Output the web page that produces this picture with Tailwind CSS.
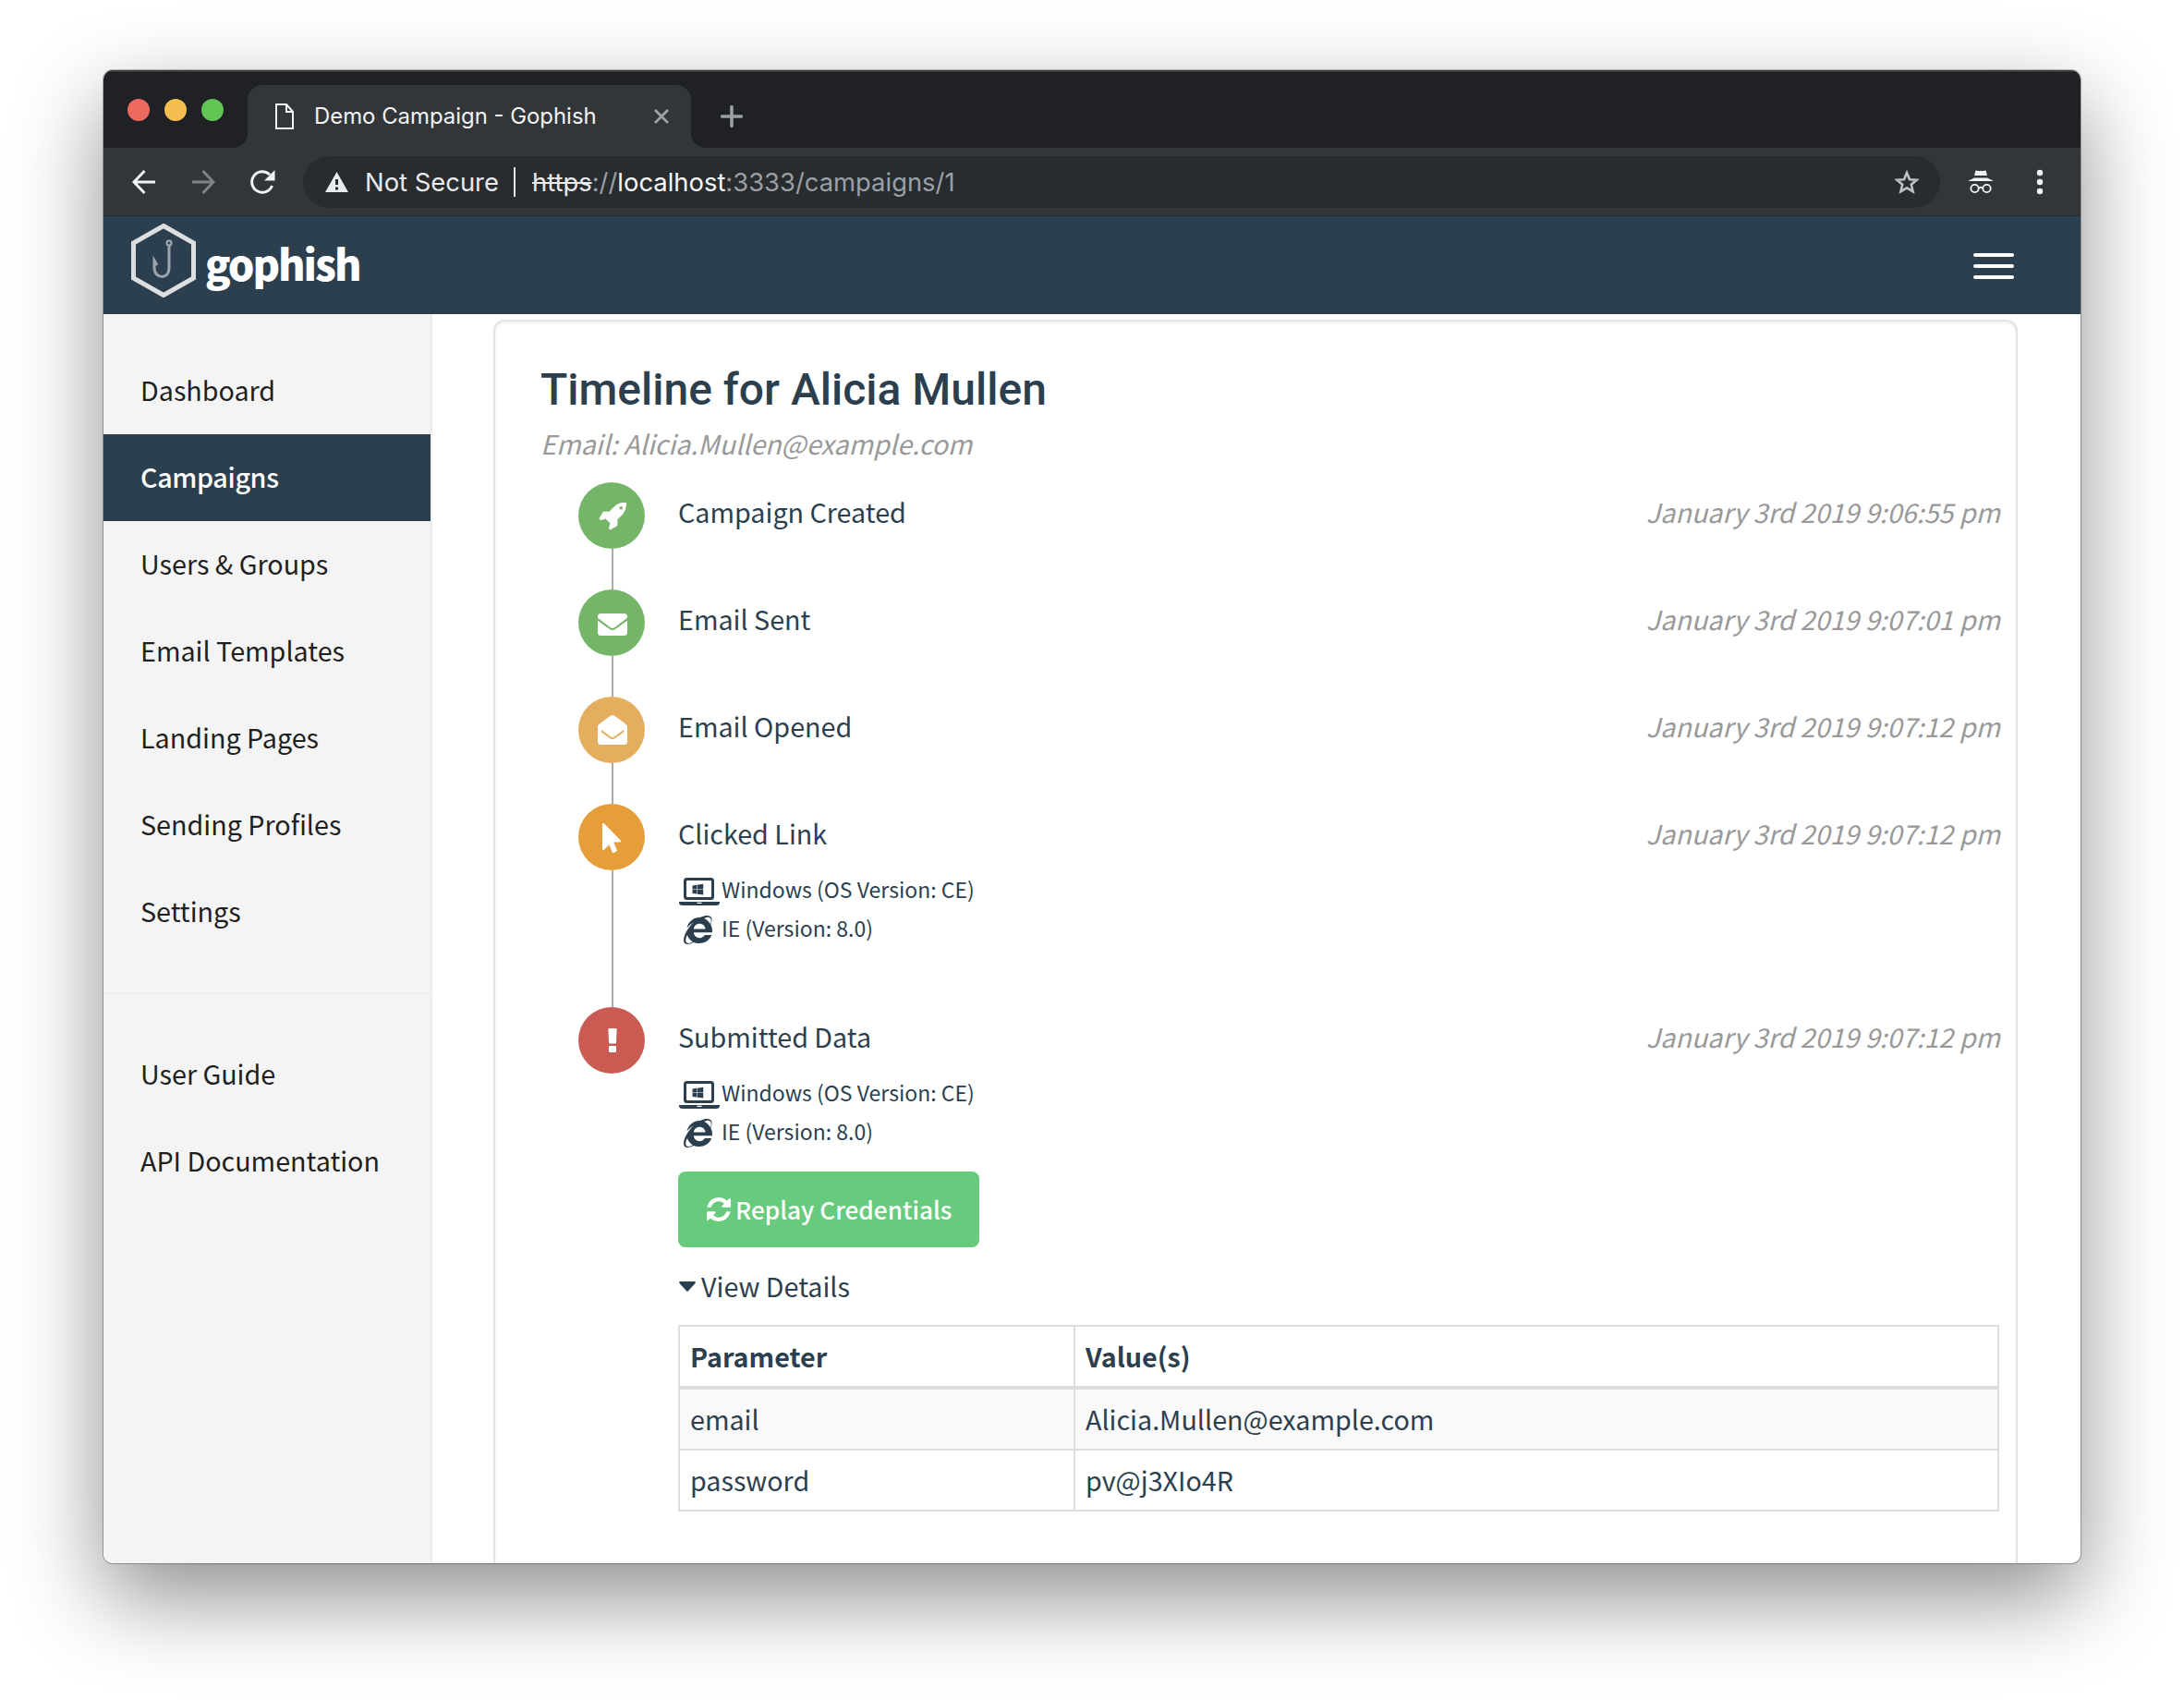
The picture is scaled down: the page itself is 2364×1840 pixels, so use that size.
<!DOCTYPE html>
<html lang="en">
<head>
<meta charset="utf-8">
<title>Demo Campaign - Gophish</title>
<script src="https://cdn.jsdelivr.net/npm/@tailwindcss/browser@4"></script>
</head>
<body class="bg-white">
<svg class="hidden">
  <symbol id="laptop" viewBox="0 0 44 30"><path fill-rule="evenodd" d="M8.500 0h26a3.500 3.500 0 0 1 3.500 3.500v17a3.500 3.500 0 0 1-3.500 3.500h-26a3.500 3.500 0 0 1-3.500-3.500v-17A3.500 3.500 0 0 1 8.500 0zm.5 3a1 1 0 0 0-1 1v16a1 1 0 0 0 1 1h25a1 1 0 0 0 1-1V4a1 1 0 0 0-1-1zM0 26h44v1.500q-.5 2.500-4 2.500H4q-3.500 0-4-2.500zm19.500.8v1.200h5v-1.200z"/><path transform="translate(14.500 6) scale(.0262)" d="M0 93.700l183.600-25.300v177.400H0V93.700zm0 324.600l183.600 25.300V268.400H0v149.900zm203.800 28L448 480V268.400H203.800v177.900zm0-380.600v180.100H448V32L203.800 65.700z"/></symbol>
  <symbol id="ie" viewBox="0 0 512 512"><path d="M483.049 159.706c10.855-24.575 21.424-60.438 21.424-87.871 0-72.722-79.641-98.371-209.673-38.577-107.632-7.181-211.221 73.670-237.098 186.457 30.852-34.862 78.271-82.298 121.977-101.158C125.404 166.850 79.128 228.002 43.992 291.725 23.246 329.651 0 390.940 0 436.747c0 98.575 92.854 86.500 180.251 42.006 31.423 15.430 66.559 15.573 101.695 15.573 97.124 0 184.249-54.294 216.814-146.022H377.927c-52.509 88.593-196.819 52.996-196.819-47.436H509.900c6.407-43.581-1.655-95.715-26.851-141.162zM64.559 346.877c17.711 51.150 53.703 95.871 100.266 123.304-88.741 48.940-173.267 29.096-100.266-123.304zm115.977-108.873c2-55.151 50.276-94.871 103.980-94.871 53.418 0 101.981 39.720 103.981 94.871H180.536zm184.536-187.600c21.425-10.287 48.563-22.003 72.558-22.003 31.422 0 54.274 21.717 54.274 53.722 0 20.003-7.427 49.007-14.569 67.867-26.280-42.292-65.986-81.584-112.263-99.586z"/></symbol>
</svg>

<div class="w-[2364px] h-[1840px] overflow-hidden pt-[76px] pl-[112px]">
<div class="w-[2140px] h-[1616px] rounded-[10px] overflow-hidden bg-white flex flex-col shadow-[0_0_0_1px_rgba(0,0,0,.28),0_36px_96px_rgba(0,0,0,.45)]">

  <!-- Tab strip -->
  <div class="h-[84px] shrink-0 bg-[#202124] flex items-end border-t-2 border-[#3a3b3e] font-['Inter',sans-serif]">
    <div class="flex gap-4 pl-[26px] pb-[29px] w-[140px]">
      <span class="size-6 rounded-full bg-[#ed6a5e]"></span>
      <span class="size-6 rounded-full bg-[#f5bf4f]"></span>
      <span class="size-6 rounded-full bg-[#61c554]"></span>
    </div>
    <svg class="w-4 h-4" viewBox="0 0 16 16" fill="#323639"><path d="M16 0v16H0A16 16 0 0 0 16 0z"/></svg>
    <div class="w-[480px] h-[68px] bg-[#323639] rounded-t-[16px] flex items-center pl-[30px]">
      <svg class="w-5 h-7" viewBox="0 0 20 28" fill="none" stroke="#f1f3f4" stroke-width="2"><path d="M1 1h11l7 8v18H1zM12 1v8h7"/></svg>
      <span class="ml-[22px] w-[368px] text-[23.9px] leading-[40px] text-[#f1f3f4] whitespace-nowrap">Demo Campaign - Gophish</span>
      <svg class="w-4 h-4 mr-6 shrink-0" viewBox="0 0 16 16" fill="none" stroke="#9fa3a6" stroke-width="2.800"><path d="M1 1l14 14M15 1L1 15"/></svg>
    </div>
    <svg class="w-4 h-4" viewBox="0 0 16 16" fill="#323639"><path d="M0 0v16h16A16 16 0 0 1 0 0z"/></svg>
    <svg class="w-6 h-6 ml-4 mb-[22px]" viewBox="0 0 24 24" fill="none" stroke="#9aa0a6" stroke-width="3.600" stroke-linecap="round"><path d="M12 1.700v20.600M1.700 12h20.600"/></svg>
  </div>

  <!-- Toolbar -->
  <div class="h-[74px] shrink-0 bg-[#323639] border-b border-[#23272a] flex items-center pl-[31px] font-['Inter',sans-serif]">
    <svg class="w-[26px] h-[26px]" viewBox="0 0 26 26" fill="none" stroke="#f1f3f4" stroke-width="3"><path d="M25 13H2M13.500 1L2 13l11.500 12"/></svg>
    <svg class="w-[26px] h-[26px] ml-[38px]" viewBox="0 0 26 26" fill="none" stroke="#7f8386" stroke-width="3"><path d="M1 13h23M12.500 1L24 13 12.500 25"/></svg>
    <svg class="w-7 h-[26px] ml-[37px] mr-px" viewBox="0 0 28 26"><path d="M24.500 17A11.300 11.300 0 1 1 22 5" fill="none" stroke="#f1f3f4" stroke-width="3"/><path d="M27.500 0v11.500H16z" fill="#f1f3f4"/></svg>
    <div class="ml-[29px] w-[1772px] h-14 rounded-full bg-[#282c2f] flex items-center pl-6 text-[27.4px] leading-[40px] whitespace-nowrap">
      <svg class="w-[25px] h-[22px] shrink-0" viewBox="0 0 25 22"><path fill="#e8eaed" fill-rule="evenodd" d="M12.500 0L25 22H0zM11 8v6h3V8zm0 8.500v3h3v-3z"/></svg>
      <span class="ml-[18px] w-[161px] text-[#e8eaed]">Not Secure</span>
      <span class="w-[2px] h-8 bg-[#e8eaed]"></span>
      <span class="ml-[18px] text-[#9aa0a6]"><span class="line-through text-[#e8eaed]">https</span>://<span class="text-[#f8f9fa]">localhost</span>:3333/campaigns/1</span>
      <svg class="w-7 h-7 ml-auto mr-[22px]" viewBox="0 0 28 28" fill="none" stroke="#bdc1c6" stroke-width="2.600"><path d="M14 4l3 7.200 7.600.6-5.800 5 1.800 7.500L14 20.300l-6.600 4 1.800-7.500-5.800-5 7.600-.6z"/></svg>
    </div>
    <svg class="w-7 h-[26px] ml-[30px]" viewBox="0 0 28 26" fill="#f1f3f4"><path d="M8.500.5L11.500 1h5l3-.5L21 6H7zM7 8.500h14L28 12H0z"/><g fill="none" stroke="#f1f3f4" stroke-width="1.800"><circle cx="7.500" cy="20" r="4.200"/><circle cx="20.500" cy="20" r="4.200"/><path d="M11.500 19.500q2.500-1.500 5 0"/></g></svg>
    <svg class="w-2 h-7 ml-[46px]" viewBox="0 0 8 28" fill="#f1f3f4"><circle cx="4" cy="4" r="3.200"/><circle cx="4" cy="14" r="3.200"/><circle cx="4" cy="24" r="3.200"/></svg>
  </div>

  <!-- Navbar -->
  <div class="h-[106px] shrink-0 bg-[#2c3f4f] flex items-center pl-[30px] pr-[72px] font-['Noto_Sans_CJK_SC','Noto_Sans',sans-serif]">
    <svg class="w-[70px] h-20 mb-[10px]" viewBox="0 0 70 80" fill="none"><path d="M35 2.500L67.500 21v38L35 77.500 2.500 59V21z" stroke="#dcdee0" stroke-width="5"/><circle cx="41" cy="21" r="2.500" stroke="#a3acb4" stroke-width="2"/><path d="M41 24v24c0 13-16 12-16 0v-8l3 5" stroke="#9aa5ae" stroke-width="3"/></svg>
    <span class="ml-[10px] mb-1 text-[45px] leading-[60px] tracking-[-2px] font-black text-white">gophish</span>
    <div class="ml-auto w-11 flex flex-col gap-2 mt-[2px]">
      <span class="h-1 rounded-full bg-white"></span><span class="h-1 rounded-full bg-white"></span><span class="h-1 rounded-full bg-white"></span>
    </div>
  </div>

  <!-- Page -->
  <div class="flex-1 flex min-h-0 font-['Noto_Sans_CJK_SC','Noto_Sans',sans-serif] text-[28.7px] text-[#2c3f4f] whitespace-nowrap">
    <nav class="w-[356px] shrink-0 bg-[#f4f4f4] border-r-2 border-[#eee] pt-9 text-[#1f1f1f]">
      <a class="block h-[94px] pl-10 leading-[91px]">Dashboard</a>
      <a class="block h-[94px] pl-10 leading-[91px] bg-[#2c3f4f] text-white font-medium tracking-[-0.35px]">Campaigns</a>
      <a class="block h-[94px] pl-10 leading-[91px]">Users &amp; Groups</a>
      <a class="block h-[94px] pl-10 leading-[91px]">Email Templates</a>
      <a class="block h-[94px] pl-10 leading-[91px]">Landing Pages</a>
      <a class="block h-[94px] pl-10 leading-[91px]">Sending Profiles</a>
      <a class="block h-[94px] pl-10 leading-[91px]">Settings</a>
      <div class="mt-10 mb-10 h-[2px] bg-[#eee]"></div>
      <a class="block h-[94px] pl-10 leading-[91px]">User Guide</a>
      <a class="block h-[94px] pl-10 leading-[91px]">API Documentation</a>
    </nav>

    <main class="ml-[66px] mt-[6px] w-[1650px] rounded-t-[12px] border-2 border-b-0 border-[#e3e3e3] shadow-[inset_0_2px_3px_rgba(0,0,0,.06)] pl-[49px] pr-[17px]">
      <h3 class="mt-[46px] h-[56px] font-['Roboto',sans-serif] font-medium text-[48px] leading-[56px]">Timeline for Alicia Mullen</h3>
      <p class="mt-[10px] h-[40px] leading-[40px] italic text-[#999]">Email: Alicia.Mullen@example.com</p>

      <div class="mt-[22px] ml-[41px]">
        <div class="flex h-[116px]">
          <div class="w-[72px] flex flex-col items-center">
            <div class="size-[72px] shrink-0 rounded-full bg-[#75b568] flex items-center justify-center"><svg class="size-[30px] mt-[2px] ml-px" viewBox="0 0 1664 1664" fill="#fff"><path d="M1440 320q0-40-28-68t-68-28-68 28-28 68 28 68 68 28 68-28 28-68zm224-288q0 249-75.500 430.500T1335 823q-81 80-195 176l-20 379q-2 16-16 26l-384 224q-7 4-16 4-12 0-23-9l-64-64q-13-14-8-32l85-276-281-281-276 85q-3 1-9 1-14 0-23-9l-64-64q-17-19-5-39l224-384q10-14 26-16l379-20q96-114 176-195Q1035 130 1205 59t431-59q14 0 21 9.500t7 22.500z" fill-rule="evenodd"/></svg></div>
            <div class="w-[2px] grow bg-[#aaa] ml-[2px]"></div>
          </div>
          <div class="ml-9 flex-1 flex justify-between leading-[64px]"><span>Campaign Created</span><span class="italic text-[#999]">January 3rd 2019 9:06:55 pm</span></div>
        </div>
        <div class="flex h-[116px]">
          <div class="w-[72px] flex flex-col items-center">
            <div class="size-[72px] shrink-0 rounded-full bg-[#75b568] flex items-center justify-center"><svg class="size-8 mt-1 ml-px" viewBox="0 0 512 512" fill="#fff"><path d="M502.300 190.800c3.900-3.100 9.700-.2 9.700 4.700V400c0 26.500-21.500 48-48 48H48c-26.500 0-48-21.500-48-48V195.600c0-5 5.700-7.800 9.700-4.700 22.400 17.400 52.100 39.500 154.100 113.600 21.100 15.400 56.700 47.800 92.200 47.600 35.700.3 72-32.800 92.300-47.600 102-74.100 131.600-96.300 154-113.700zM256 320c23.200.4 56.600-29.200 73.400-41.400 132.700-96.300 142.800-104.700 173.400-128.700 5.800-4.500 9.200-11.500 9.200-18.900v-19c0-26.500-21.500-48-48-48H48c-26.500 0-48 21.500-48 48v19c0 7.400 3.400 14.300 9.200 18.900 30.600 23.900 40.700 32.400 173.400 128.700 16.800 12.200 50.200 41.800 73.400 41.400z"/></svg></div>
            <div class="w-[2px] grow bg-[#aaa] ml-[2px]"></div>
          </div>
          <div class="ml-9 flex-1 flex justify-between leading-[64px]"><span>Email Sent</span><span class="italic text-[#999]">January 3rd 2019 9:07:01 pm</span></div>
        </div>
        <div class="flex h-[116px]">
          <div class="w-[72px] flex flex-col items-center">
            <div class="size-[72px] shrink-0 rounded-full bg-[#e5ae5e] flex items-center justify-center"><svg class="size-8 ml-px" viewBox="0 0 512 512" fill="#fff"><path d="M512 464c0 26.510-21.490 48-48 48H48c-26.510 0-48-21.490-48-48V200.724a48 48 0 0 1 18.387-37.776c24.913-19.529 45.501-35.365 164.200-121.511C199.412 29.170 232.797-.347 256 .003c23.198-.354 56.596 29.172 73.413 41.433 118.687 86.137 139.303 101.995 164.200 121.512A48 48 0 0 1 512 200.724V464zm-65.666-196.605c-2.563-3.728-7.700-4.595-11.339-1.907-22.845 16.873-55.462 40.705-105.582 77.079-16.825 12.266-50.210 41.781-73.413 41.430-23.211.344-56.559-29.143-73.413-41.430-50.114-36.370-82.734-60.204-105.582-77.079-3.639-2.688-8.776-1.821-11.339 1.907l-9.072 13.196a7.998 7.998 0 0 0 1.839 10.967c22.887 16.899 55.454 40.690 105.303 76.868 20.274 14.781 56.524 47.813 92.264 47.573 35.724.242 71.961-32.771 92.263-47.573 49.850-36.179 82.418-59.970 105.303-76.868a7.998 7.998 0 0 0 1.839-10.967l-9.073-13.196z"/></svg></div>
            <div class="w-[2px] grow bg-[#aaa] ml-[2px]"></div>
          </div>
          <div class="ml-9 flex-1 flex justify-between leading-[64px]"><span>Email Opened</span><span class="italic text-[#999]">January 3rd 2019 9:07:12 pm</span></div>
        </div>
        <div class="flex h-[220px]">
          <div class="w-[72px] flex flex-col items-center">
            <div class="size-[72px] shrink-0 rounded-full bg-[#e59e39] flex items-center justify-center"><svg class="h-8 w-5 mr-px mt-px" viewBox="0 0 320 512" fill="#fff"><path d="M302.189 329.126H196.105l55.831 135.993c3.889 9.428-.555 19.999-9.444 23.999l-49.165 21.427c-9.165 4-19.443-.571-23.332-9.714l-53.053-129.136-86.664 89.138C18.729 472.710 0 463.554 0 447.977V18.299C0 1.899 19.921-6.096 30.277 5.443l284.412 292.542c11.472 11.179 3.007 31.141-12.500 31.141z"/></svg></div>
            <div class="w-[2px] grow bg-[#aaa] ml-[2px]"></div>
          </div>
          <div class="ml-9 flex-1">
            <div class="flex justify-between leading-[64px]"><span>Clicked Link</span><span class="italic text-[#999]">January 3rd 2019 9:07:12 pm</span></div>
            <div class="mt-[7px] flex items-center h-[42px] text-[23px] leading-[42px]"><svg class="w-11 h-[30px] ml-px mr-[2px] mt-[6px]" fill="#2c3f4f"><use href="#laptop"/></svg><span>Windows (OS Version: CE)</span></div>
            <div class="flex items-center h-[42px] text-[23px] leading-[42px]"><svg class="w-[31px] h-[31px] ml-[6px] mr-[10px] mt-[5px]" fill="#2c3f4f"><use href="#ie"/></svg><span>IE (Version: 8.0)</span></div>
          </div>
        </div>
        <div class="flex">
          <div class="size-[72px] shrink-0 rounded-full bg-[#c95b52] flex items-center justify-center"><svg class="w-[10px] h-[26px] ml-px" viewBox="0 0 10 26" fill="#fff"><path d="M1.500 0h7q1.200 0 1.100 1.200L9 15.500q-.1 1-1 1H2q-.9 0-1-1L.4 1.200Q.3 0 1.500 0z"/><rect x="1" y="19" width="8" height="7" rx="1"/></svg></div>
          <div class="ml-9 flex-1">
            <div class="flex justify-between leading-[64px]"><span>Submitted Data</span><span class="italic text-[#999]">January 3rd 2019 9:07:12 pm</span></div>
            <div class="mt-[7px] flex items-center h-[42px] text-[23px] leading-[42px]"><svg class="w-11 h-[30px] ml-px mr-[2px] mt-[6px]" fill="#2c3f4f"><use href="#laptop"/></svg><span>Windows (OS Version: CE)</span></div>
            <div class="flex items-center h-[42px] text-[23px] leading-[42px]"><svg class="w-[31px] h-[31px] ml-[6px] mr-[10px] mt-[5px]" fill="#2c3f4f"><use href="#ie"/></svg><span>IE (Version: 8.0)</span></div>
            <button class="mt-[23px] w-[326px] h-[82px] rounded-lg bg-[#68ca7c] text-white text-[26.2px] font-medium flex items-center pl-[31px] leading-[78px]"><svg class="size-[26px] mr-[5px]" viewBox="0 0 1536 1536" fill="#fff"><path d="M1511 928q0 5-1 7-64 268-268 434.500T764 1536q-146 0-282.500-55T238 1324l-129 129q-19 19-45 19t-45-19-19-45V960q0-26 19-45t45-19h448q26 0 45 19t19 45-19 45l-137 137q71 66 161 102t187 36q134 0 250-65t186-179q11-17 53-117 8-23 30-23h192q13 0 22.500 9.500t9.500 22.500zm25-800v448q0 26-19 45t-45 19h-448q-26 0-45-19t-19-45 19-45l138-138Q969 256 768 256q-134 0-250 65T332 500q-11 17-53 117-8 23-30 23H50q-13 0-22.500-9.500T18 608v-7q65-268 270-434.500T768 0q146 0 284 55.500T1297 212l130-129q19-19 45-19t45 19 19 45z"/></svg><span>Replay Credentials</span></button>
            <div class="mt-[12px] h-[60px] flex items-center leading-[60px]"><svg class="w-[18px] h-[11px] ml-px mr-[6px]" viewBox="0 0 18 11" fill="#2c3f4f"><path d="M1 0h16q1.500.5.5 2L10 10.300q-1 1-2 0L.5 2Q-.5.5 1 0z"/></svg><span>View Details</span></div>
            <table class="mt-[12px] w-[1430px] h-[202px] table-fixed border-separate border-spacing-0 border-2 border-[#ddd] text-left">
              <tr class="h-[68px]"><th class="w-[428px] p-0 pl-[11px] font-bold leading-[62px] border-b-4 border-r-2 border-[#ddd]">Parameter</th><th class="p-0 pl-[11px] font-bold leading-[62px] border-b-4 border-[#ddd]">Value(s)</th></tr>
              <tr class="h-[66px] bg-[#f9f9f9]"><td class="p-0 pl-[11px] leading-[62px] border-b-2 border-r-2 border-[#ddd]">email</td><td class="p-0 pl-[11px] leading-[62px] border-b-2 border-[#ddd]">Alicia.Mullen@example.com</td></tr>
              <tr class="h-[64px]"><td class="p-0 pl-[11px] leading-[62px] border-r-2 border-[#ddd]">password</td><td class="p-0 pl-[11px] leading-[62px]">pv@j3XIo4R</td></tr>
            </table>
          </div>
        </div>
      </div>
    </main>
  </div>
</div>
</div>
</body>
</html>
